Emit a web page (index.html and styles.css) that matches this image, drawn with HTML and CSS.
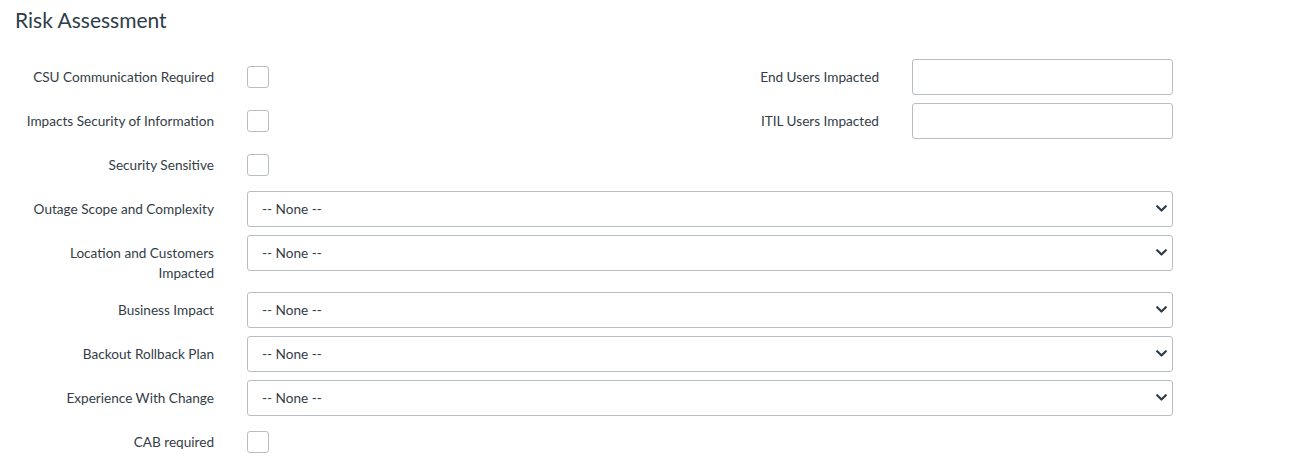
FILE: index.html
```html
<!DOCTYPE html>
<html>
<head>
<meta charset="utf-8">
<link rel="stylesheet" href="styles.css">
</head>
<body>
<div class="section">
  <h2 class="title">Risk Assessment</h2>

  <div class="split">
    <div class="col-left">
      <div class="row">
        <label class="lbl">CSU Communication Required</label>
        <div class="ctl"><input type="checkbox" class="cb"></div>
      </div>
      <div class="row">
        <label class="lbl">Impacts Security of Information</label>
        <div class="ctl"><input type="checkbox" class="cb"></div>
      </div>
      <div class="row">
        <label class="lbl">Security Sensitive</label>
        <div class="ctl"><input type="checkbox" class="cb"></div>
      </div>
    </div>
    <div class="col-right">
      <div class="row">
        <label class="lbl">End Users Impacted</label>
        <div class="ctl"><input type="text" class="txt"></div>
      </div>
      <div class="row">
        <label class="lbl">ITIL Users Impacted</label>
        <div class="ctl"><input type="text" class="txt"></div>
      </div>
    </div>
  </div>

  <div class="row wide">
    <label class="lbl">Outage Scope and Complexity</label>
    <div class="ctl sel-wrap">
      <select class="sel"><option>-- None --</option></select>
      <svg class="chev" width="11" height="7" viewBox="0 0 11 7"><path d="M1.2 1.2 L5.5 5.5 L9.8 1.2" fill="none" stroke="#2e3d49" stroke-width="2.2" stroke-linecap="round" stroke-linejoin="round"/></svg>
    </div>
  </div>
  <div class="row wide">
    <label class="lbl">Location and Customers Impacted</label>
    <div class="ctl sel-wrap">
      <select class="sel"><option>-- None --</option></select>
      <svg class="chev" width="11" height="7" viewBox="0 0 11 7"><path d="M1.2 1.2 L5.5 5.5 L9.8 1.2" fill="none" stroke="#2e3d49" stroke-width="2.2" stroke-linecap="round" stroke-linejoin="round"/></svg>
    </div>
  </div>
  <div class="row wide">
    <label class="lbl">Business Impact</label>
    <div class="ctl sel-wrap">
      <select class="sel"><option>-- None --</option></select>
      <svg class="chev" width="11" height="7" viewBox="0 0 11 7"><path d="M1.2 1.2 L5.5 5.5 L9.8 1.2" fill="none" stroke="#2e3d49" stroke-width="2.2" stroke-linecap="round" stroke-linejoin="round"/></svg>
    </div>
  </div>
  <div class="row wide">
    <label class="lbl">Backout Rollback Plan</label>
    <div class="ctl sel-wrap">
      <select class="sel"><option>-- None --</option></select>
      <svg class="chev" width="11" height="7" viewBox="0 0 11 7"><path d="M1.2 1.2 L5.5 5.5 L9.8 1.2" fill="none" stroke="#2e3d49" stroke-width="2.2" stroke-linecap="round" stroke-linejoin="round"/></svg>
    </div>
  </div>
  <div class="row wide">
    <label class="lbl">Experience With Change</label>
    <div class="ctl sel-wrap">
      <select class="sel"><option>-- None --</option></select>
      <svg class="chev" width="11" height="7" viewBox="0 0 11 7"><path d="M1.2 1.2 L5.5 5.5 L9.8 1.2" fill="none" stroke="#2e3d49" stroke-width="2.2" stroke-linecap="round" stroke-linejoin="round"/></svg>
    </div>
  </div>
  <div class="row">
    <label class="lbl">CAB required</label>
    <div class="ctl"><input type="checkbox" class="cb"></div>
  </div>
</div>
</body>
</html>
```

FILE: styles.css
```css
* { box-sizing: border-box; }
html, body {
  margin: 0;
  padding: 0;
  background: #ffffff;
}
body {
  font-family: Lato, "Liberation Sans", sans-serif;
  font-size: 13.6px;
  color: #2e2e2e;
}
.section {
  width: 1173px;
  padding-top: 5px;
}
.title {
  margin: 0 0 24px 15px;
  font-size: 21px;
  line-height: 30px;
  font-weight: 400;
  color: #2e3d49;
}
.split {
  display: flex;
}
.col-left {
  width: 665px;
}
.col-right {
  flex: 1;
}
.row {
  display: flex;
  align-items: flex-start;
  margin-bottom: 8px;
}
.lbl {
  width: 214px;
  flex: none;
  text-align: right;
  line-height: 20px;
  padding-top: 8px;
  padding-bottom: 1px;
  padding-left: 20px;
  color: #343d47;
}
.ctl {
  margin-left: 33px;
  height: 36px;
  display: flex;
  align-items: center;
  flex: 1;
}
.cb {
  appearance: none;
  -webkit-appearance: none;
  margin: 0;
  width: 22px;
  height: 22px;
  border: 1px solid #b8bec4;
  border-radius: 3px;
  background: #fff;
}
.txt {
  width: 100%;
  height: 36px;
  margin: 0;
  border: 1px solid #b8bec4;
  border-radius: 3px;
  background: #fff;
  font: inherit;
}
.sel-wrap {
  position: relative;
}
.sel {
  appearance: none;
  -webkit-appearance: none;
  width: 100%;
  height: 36px;
  margin: 0;
  padding: 0 30px 0 14px;
  border: 1px solid #b8bec4;
  border-radius: 3px;
  background: #fff;
  font-family: Lato, "Liberation Sans", sans-serif;
  font-size: 13.6px;
  color: #343d47;
}
.chev {
  position: absolute;
  right: 6px;
  top: 14px;
  pointer-events: none;
}
```
